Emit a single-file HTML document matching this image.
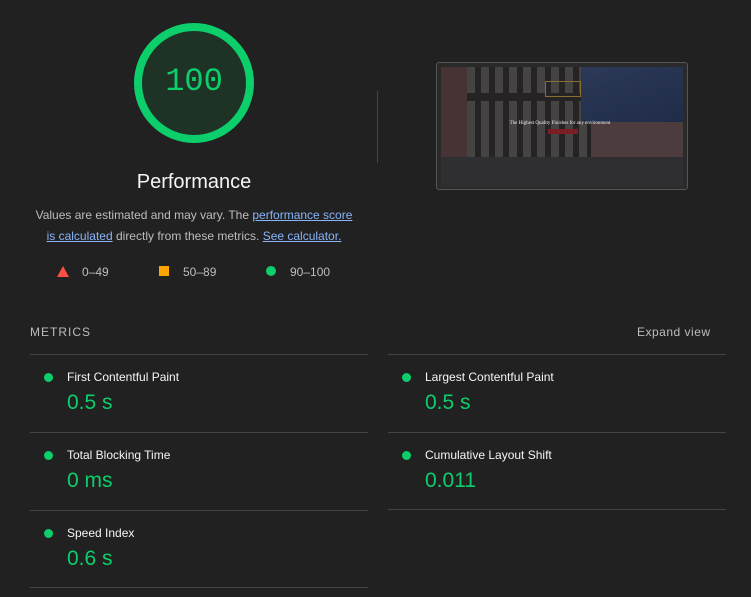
<!DOCTYPE html>
<html><head><meta charset="utf-8"><style>
body{margin:0;width:751px;height:597px;background:#212121;font-family:"Liberation Sans",Arial,sans-serif;position:relative;overflow:hidden;color:#f5f5f5}
.a{position:absolute}
.lnk{color:#8ab4f8;text-decoration:underline}
.hr{position:absolute;height:1px;background:#444}
.dot{position:absolute;width:9px;height:9px;border-radius:50%;background:#0cce6b}
.mt{position:absolute;font-size:12px;color:#f5f5f5}
.mv{position:absolute;font-size:21px;color:#0cce6b}
</style></head><body>
<svg class="a" style="left:134px;top:23px" width="120" height="120"><circle cx="60" cy="60" r="56" fill="#1e3326" stroke="#0cce6b" stroke-width="8"/></svg>
<div class="a" style="left:134px;top:63px;width:120px;text-align:center;font-family:'Liberation Mono',monospace;font-size:32px;color:#0cce6b">100</div>
<div class="a" style="left:94px;top:171px;width:200px;text-align:center;font-size:20px">Performance</div>
<div class="a" style="left:30px;top:205px;width:328px;text-align:center;font-size:12px;line-height:21px;color:#bdbdbd">Values are estimated and may vary. The <span class="lnk">performance score</span><br><span class="lnk">is calculated</span> directly from these metrics. <span class="lnk">See calculator.</span></div>
<svg class="a" style="left:57px;top:266px" width="12" height="11"><polygon points="6,0 12,11 0,11" fill="#ff4e42"/></svg>
<div class="a" style="left:82px;top:265px;font-size:12px;color:#bdbdbd">0–49</div>
<div class="a" style="left:159px;top:266px;width:10px;height:10px;background:#ffa400"></div>
<div class="a" style="left:183px;top:265px;font-size:12px;color:#bdbdbd">50–89</div>
<div class="dot" style="left:266px;top:266px;width:10px;height:10px"></div>
<div class="a" style="left:290px;top:265px;font-size:12px;color:#bdbdbd">90–100</div>
<div class="a" style="left:377px;top:91px;width:1px;height:72px;background:#444"></div>
<div class="a" style="left:436px;top:62px;width:250px;height:126px;border:1px solid #555;border-radius:3px;background:#2a2a2a"></div>
<div class="a" style="left:441px;top:67px;width:242px;height:120px;overflow:hidden;background:#3a3838">
 <div class="a" style="left:0;top:0;width:26px;height:90px;background:#8a5a55"></div>
 <div class="a" style="left:26px;top:0;width:150px;height:95px;background:repeating-linear-gradient(90deg,#8a857d 0 8px,#3a3430 8px 14px)"></div>
 <div class="a" style="left:26px;top:26px;width:150px;height:8px;background:#3a3430"></div>
 <div class="a" style="left:140px;top:0;width:102px;height:55px;background:linear-gradient(160deg,#4a6ab0,#2a4a8a)"></div>
 <div class="a" style="left:150px;top:55px;width:92px;height:40px;background:#9a7270"></div>
 <div class="a" style="left:0;top:90px;width:242px;height:30px;background:#505054"></div>
 <div class="a" style="left:0;top:0;width:242px;height:120px;background:rgba(25,25,28,.6)"></div>
 <div class="a" style="left:104px;top:14px;width:34px;height:14px;border:1px solid #8a7030"></div>
 <div class="a" style="left:44px;top:54px;width:150px;text-align:center;font-family:'Liberation Serif',serif;font-size:5px;color:#eee">The Highest Quality Finishes for any environment</div>
 <div class="a" style="left:107px;top:62px;width:30px;height:5px;background:#7a1e25"></div>
</div>
<div class="a" style="left:30px;top:325px;font-size:12px;letter-spacing:1px;color:#bdbdbd">METRICS</div>
<div class="a" style="left:637px;top:325px;font-size:12px;letter-spacing:.5px;color:#bdbdbd">Expand view</div>
<div class="hr" style="left:30px;top:354px;width:338px"></div>
<div class="hr" style="left:388px;top:354px;width:338px"></div>
<div class="hr" style="left:30px;top:432px;width:338px"></div>
<div class="hr" style="left:388px;top:432px;width:338px"></div>
<div class="hr" style="left:30px;top:510px;width:338px"></div>
<div class="hr" style="left:388px;top:509px;width:338px"></div>
<div class="hr" style="left:30px;top:587px;width:338px"></div>
<div class="dot" style="left:44px;top:373px"></div><div class="mt" style="left:67px;top:370px">First Contentful Paint</div><div class="mv" style="left:67px;top:391px">0.5 s</div>
<div class="dot" style="left:402px;top:373px"></div><div class="mt" style="left:425px;top:370px">Largest Contentful Paint</div><div class="mv" style="left:425px;top:391px">0.5 s</div>
<div class="dot" style="left:44px;top:451px"></div><div class="mt" style="left:67px;top:448px">Total Blocking Time</div><div class="mv" style="left:67px;top:469px">0 ms</div>
<div class="dot" style="left:402px;top:451px"></div><div class="mt" style="left:425px;top:448px">Cumulative Layout Shift</div><div class="mv" style="left:425px;top:469px">0.011</div>
<div class="dot" style="left:44px;top:529px"></div><div class="mt" style="left:67px;top:526px">Speed Index</div><div class="mv" style="left:67px;top:547px">0.6 s</div>
</body></html>
